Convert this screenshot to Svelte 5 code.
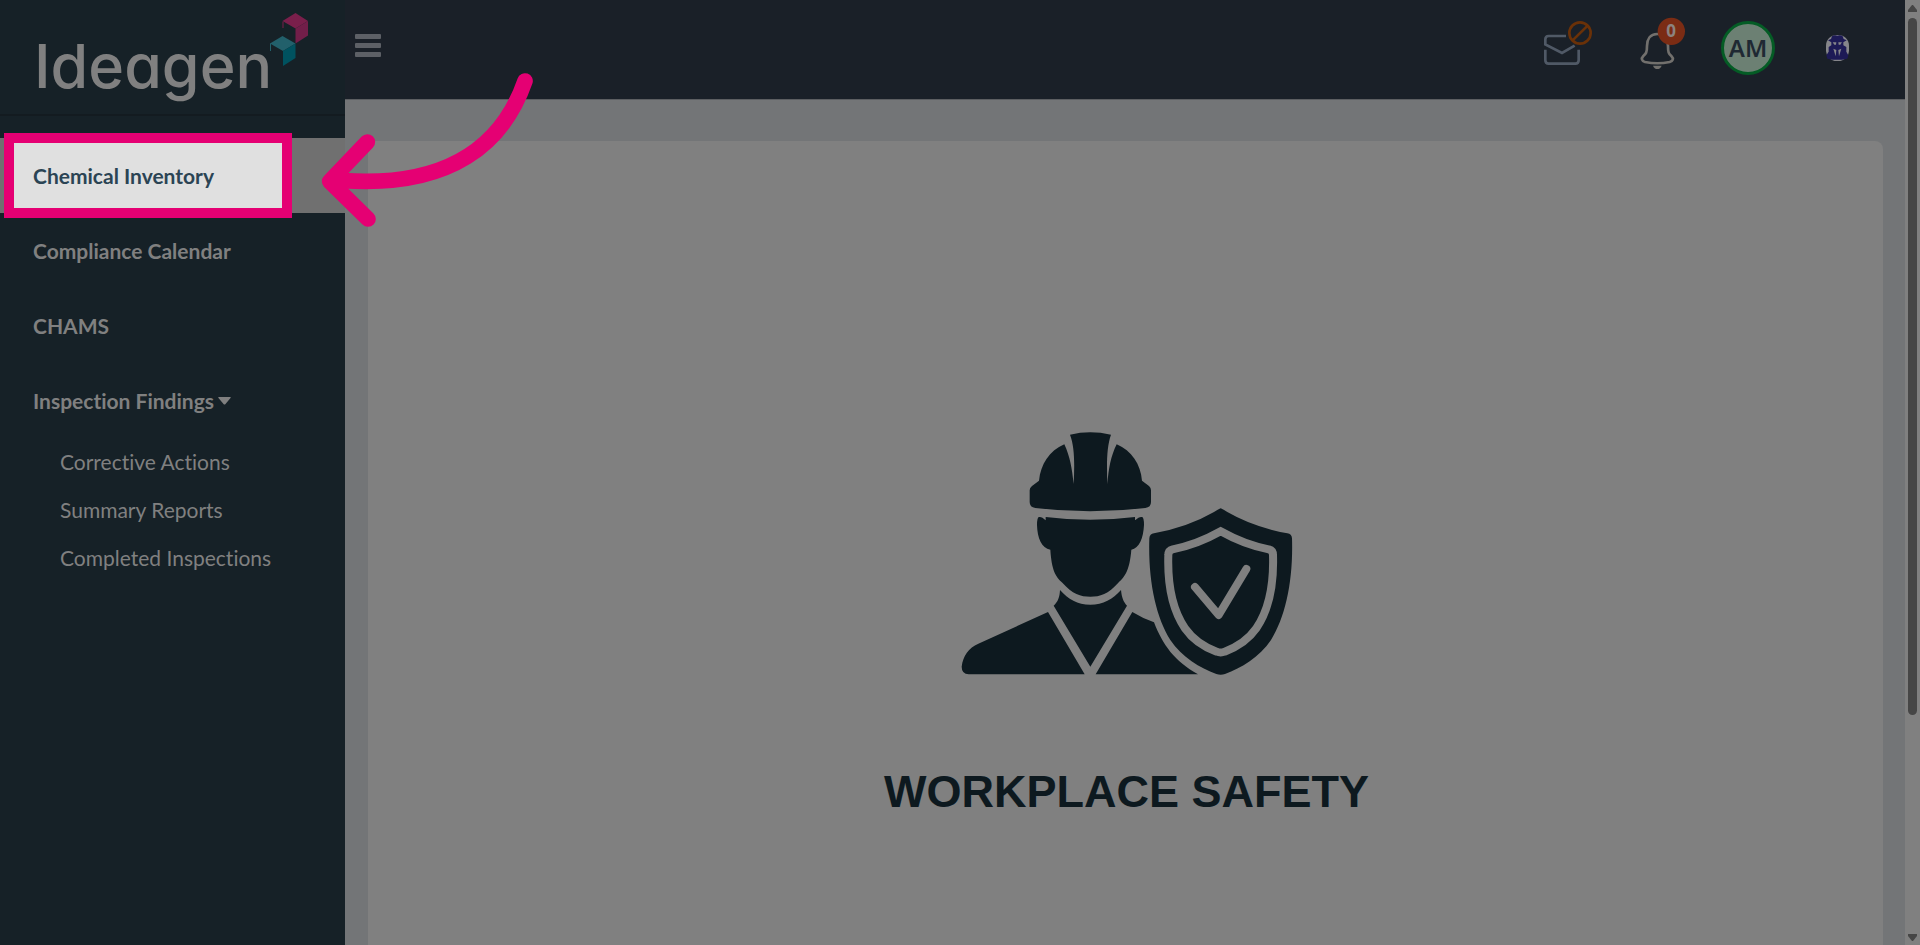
<script lang="ts">
	type NavItem = {
		label: string;
		active?: boolean;
		children?: string[];
	};

	const navItems: NavItem[] = [
		{ label: 'Chemical Inventory', active: true },
		{ label: 'Compliance Calendar' },
		{ label: 'CHAMS' },
		{
			label: 'Inspection Findings',
			children: ['Corrective Actions', 'Summary Reports', 'Completed Inspections']
		}
	];

	let notifications = 0;
	let initials = 'AM';
	let findingsOpen = true;
</script>

<div class="shell">
	<aside class="sidebar">
		<a class="logo" href="#home" aria-label="Ideagen home">
			<svg width="310" height="114" viewBox="0 0 310 114">
				<text x="34" y="88">Ideagen</text>
				<path fill="#7a1f4b" d="M282.500 21 295.500 13 308 21 295.500 28.500z" />
				<path fill="#721e49" d="M308 21V35.500L295.500 43.500V28.500z" />
				<path fill="none" stroke="#7a1f4b" d="M283 28V21.500" />
				<path fill="#22606b" d="M270 43.500 282.500 36 295.500 43.500 283 51z" />
				<path fill="#00525f" d="M295.500 43.500V58L283 66V51z" />
				<path fill="none" stroke="#22606b" d="M270.500 51V43.500" />
			</svg>
		</a>
		<nav>
			<ul class="menu">
				{#each navItems as item}
					<li class:active={item.active}>
						{#if item.children}
							<button
								class="nav-link"
								type="button"
								aria-expanded={findingsOpen}
								on:click={() => (findingsOpen = !findingsOpen)}
							>
								{item.label}
								<svg class="caret" width="13" height="8" viewBox="0 0 13 8">
									<path d="M1 0H12Q13.500 0 12.500 1L7.500 7Q6.500 8 5.500 7L.5 1Q-.5 0 1 0z" />
								</svg>
							</button>
							{#if findingsOpen}
								<ul class="submenu">
									{#each item.children as child}
										<li><a href="#{child}">{child}</a></li>
									{/each}
								</ul>
							{/if}
						{:else}
							<a class="nav-link" href="#{item.label}">{item.label}</a>
							{#if item.active}
								<span class="spotlight"></span>
							{/if}
						{/if}
					</li>
				{/each}
			</ul>
		</nav>

		<!-- tour pointer, lies over sidebar and page -->
		<svg class="pointer" width="260" height="180" viewBox="0 0 780 540">
			<path d="M675 63C610 250 455 384 130 362" />
			<path d="M202 246 89 364 204 477" />
		</svg>
	</aside>

	<div class="page">
		<header class="topbar">
			<button class="toggle" type="button" aria-label="Toggle menu">
				<span></span>
				<span></span>
				<span></span>
			</button>
			<div class="tools">
				<button class="mail" type="button" aria-label="Messages">
					<svg width="48" height="54" viewBox="72 63 144 162">
						<g fill="none" stroke="#505966" stroke-width="8">
							<path d="M138 108H86Q76 108 76 118V133L126 159 164 137" />
							<path d="M76 149V181Q76 191 86 191H166Q176 191 176 181V149" />
						</g>
						<g fill="none" stroke="#6a3108" stroke-width="8">
							<circle cx="180" cy="99" r="32" />
							<path d="M157 122 203 77" />
						</g>
					</svg>
				</button>
				<button class="bell" type="button" aria-label="Notifications">
					<svg width="46" height="54" viewBox="360 63 138 162">
						<path
							fill="none"
							stroke="#72706d"
							stroke-width="8"
							d="M412 102C390 102 381 119 381 138C381 158 378 161 370 168C362 176 366 183 375 186C399 191 425 191 449 186C459 183 462 176 454 168C446 161 444 158 444 138C444 119 434 102 412 102z"
						/>
						<path fill="#72706d" d="M399 197H425Q421 207 412 207Q403 207 399 197z" />
						<circle cx="454" cy="94" r="41" fill="#7b2c14" />
						<text class="count" x="453" y="112">{notifications}</text>
					</svg>
				</button>
				<button class="avatar" type="button">{initials}</button>
				<button class="agent" type="button" aria-label="Assistant">
					<svg width="25" height="54" viewBox="915 63 75 162">
						<rect x="918" y="105" width="69" height="78" rx="32" fill="#85858a" />
						<path
							fill="#1d1a56"
							d="M936 109Q943 103 952 107Q961 103 968 109L971 117 980 121 970 127V136L979 141V155L985 166 982 176 966 179H938L922 176 919 166 926 155V141L934 136V127L924 121 933 117z"
						/>
						<path
							fill="#85858a"
							d="M938 127H949L948 134H943zM955 127H966L961 134H956zM940 146 949 150 947 169zM964 146 955 150 957 169z"
						/>
					</svg>
				</button>
			</div>
		</header>

		<main>
			<section class="card">
				<svg class="worker" width="374" height="290" viewBox="0 0 1122 870">
					<g fill="#0d191f">
						<path
							d="M390 74Q450 60 513 74C500 110 500 160 502 222C506 175 512 140 530 103C575 122 602 163 606 212L627 228Q633 233 633 241V276Q633 292 616 294Q450 314 286 294Q269 292 269 276V241Q269 233 276 228L297 212C302 163 328 122 373 103C390 140 396 175 401 222C404 160 404 110 390 74z"
						/>
						<path
							d="M297 321Q305 319 317 331V321Q450 338 585 321V331Q598 319 606 321Q612 322 612 345C610 385 598 415 574 419C569 480 555 500 535 518C505 552 480 560 451 560C422 560 397 552 367 518C347 500 335 480 331 419C305 415 292 385 291 345Q291 322 297 321z"
						/>
						<path
							d="M360 540C385 568 412 584 451 584C490 584 518 568 543 540C545 562 550 575 561 587L451 770 341 587C354 575 359 562 360 540z"
						/>
						<path
							d="M324 606 434 793H86Q65 792 65 770C69 738 86 713 115 701z"
						/>
						<path d="M577 606Q608 625 642 637C668 705 704 754 774 793H467z" />
						<path
							d="M842 295Q850 298 862 306Q940 351 1042 370Q1055 372 1056 385C1060 510 1037 620 993 690C958 742 904 774 855 792Q842 797 829 792C780 774 726 742 691 690C647 620 624 510 628 385Q629 372 642 370Q744 351 822 306Q834 298 842 295z"
						/>
					</g>
					<g fill="none" stroke="#808080" stroke-width="24">
						<path
							d="M842 364Q915 405 986 418Q999 421 999 435C1002 528 983 605 949 655C923 692 884 714 854 725Q842 730 830 725C800 714 761 692 735 655C701 605 682 528 685 435Q685 421 698 418Q769 405 842 364z"
						/>
						<path stroke-linecap="round" stroke-linejoin="round" d="M765 531 836 615 919 477" />
					</g>
				</svg>
				<h1>WORKPLACE SAFETY</h1>
			</section>
		</main>
	</div>

	<div class="scrollbar" aria-hidden="true">
		<svg width="9" height="18" viewBox="0 0 9 18">
			<path d="M4 5H5L9 10V12H0V10z" />
		</svg>
		<div class="track">
			<div class="thumb"></div>
		</div>
		<svg width="9" height="18" viewBox="0 0 9 18">
			<path d="M0 7H9V9L5 14H4L0 9z" />
		</svg>
	</div>
</div>

<style>
	:global(body) {
		margin: 0;
		background: #737577;
	}

	.shell {
		display: flex;
		min-height: 100vh;
		font-family: Lato, 'Open Sans', sans-serif;
		font-size: 21px;
		font-variant-ligatures: none;
		color: #808080;
	}

	button {
		padding: 0;
		border: none;
		background: none;
		font: inherit;
		font-variant-ligatures: none;
		color: inherit;
		text-align: left;
		cursor: pointer;
	}

	a {
		color: inherit;
		text-decoration: none;
	}

	svg {
		display: block;
		overflow: visible;
	}

	ul {
		margin: 0;
		padding: 0;
		list-style: none;
	}

	.sidebar {
		position: relative;
		flex: 0 0 345px;
		background: #162127;
	}

	.logo {
		display: block;
		border-bottom: 2px solid #131b20;
		margin-bottom: 22px;
	}

	.logo text {
		font-family: Inter, sans-serif;
		font-size: 61px;
		font-weight: 500;
		font-feature-settings: 'cv11';
		fill: #808080;
	}

	.menu > li {
		position: relative;
	}

	.nav-link {
		display: flex;
		align-items: center;
		gap: 4px;
		box-sizing: border-box;
		width: 100%;
		height: 75px;
		padding: 0 33px;
		font-weight: 700;
	}

	.active {
		background: #707070;
		color: #2b4454;
	}

	.active .nav-link {
		position: relative;
		z-index: 1;
	}

	.spotlight {
		position: absolute;
		top: -5px;
		right: 53px;
		bottom: -5px;
		left: 4px;
		border: 10px solid #e50073;
		background: #e0e0e0;
	}

	.caret {
		fill: #808080;
	}

	.submenu a {
		display: block;
		padding-left: 60px;
		line-height: 48px;
	}

	.pointer {
		position: absolute;
		top: 60px;
		left: 300px;
		z-index: 2;
		fill: none;
		stroke: #e50073;
		stroke-width: 47px;
		stroke-linecap: round;
		stroke-linejoin: round;
		pointer-events: none;
	}

	.page {
		display: flex;
		flex: 1;
		flex-direction: column;
		min-width: 0;
		background: #737577;
	}

	.topbar {
		display: flex;
		justify-content: space-between;
		box-sizing: border-box;
		height: 100px;
		padding: 21px 55px 0 10px;
		border-bottom: 1px solid #5c5e61;
		background: #1a2028;
	}

	.toggle {
		display: flex;
		flex-direction: column;
		gap: 4px;
		align-self: flex-start;
		width: 26px;
		padding-top: 13px;
	}

	.toggle span {
		height: 5px;
		border-radius: 1px;
		background: #5d6066;
	}

	.tools {
		display: flex;
		align-items: flex-start;
	}

	.bell {
		margin-left: 48px;
	}

	.count {
		font-family: 'Open Sans', sans-serif;
		font-size: 51px;
		font-weight: 700;
		text-anchor: middle;
		fill: #8c8380;
	}

	.avatar {
		box-sizing: border-box;
		width: 54px;
		height: 54px;
		margin: 0 50px 0 35px;
		border: 3px solid #045c25;
		border-radius: 50%;
		background: #6c8073;
		color: #1f2933;
		font-family: 'Noto Sans', sans-serif;
		font-size: 24px;
		font-weight: 600;
		line-height: 48px;
		text-align: center;
	}

	main {
		display: flex;
		flex: 1;
		padding: 41px 22px 0 23px;
	}

	.card {
		display: flex;
		flex: 1;
		flex-direction: column;
		align-items: center;
		padding: 269px 0 0 2px;
		border-radius: 8px 8px 0 0;
		background: #808080;
	}

	h1 {
		margin: 65px 0 0;
		color: #0d191f;
		font-family: 'Liberation Sans', Arial, sans-serif;
		font-size: 45px;
		font-weight: 700;
		line-height: 54px;
	}

	.scrollbar {
		display: flex;
		flex: 0 0 15px;
		flex-direction: column;
		align-items: center;
		background: #808080;
	}

	.scrollbar svg {
		fill: #464646;
	}

	.track {
		display: grid;
		flex: 1;
		grid-template-rows: 23fr 7fr;
		width: 9px;
	}

	.thumb {
		border-radius: 5px;
		background: #464646;
	}
</style>
